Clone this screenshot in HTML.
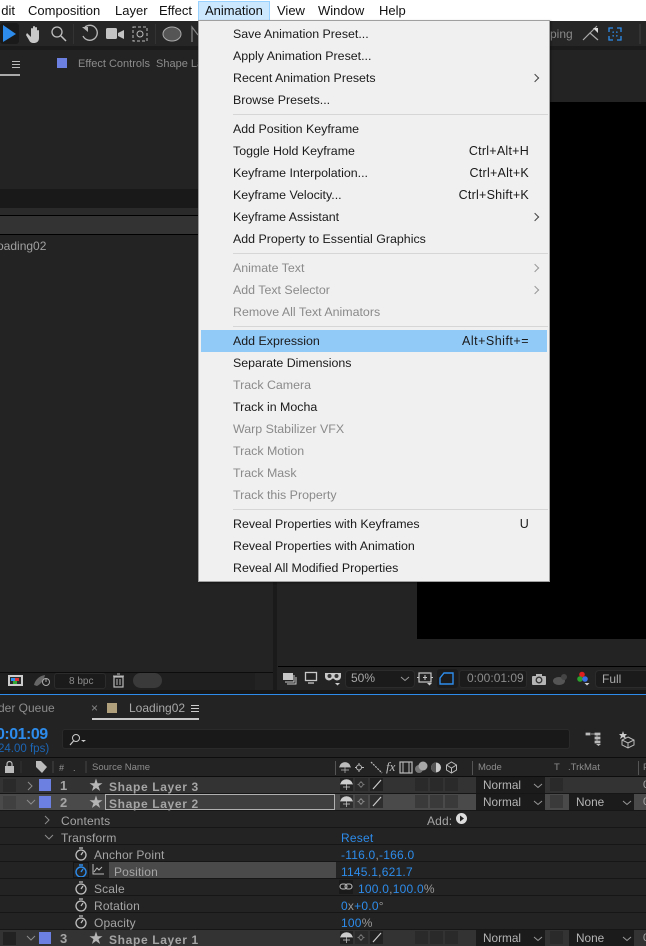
<!DOCTYPE html>
<html><head><meta charset="utf-8">
<style>
html,body{margin:0;padding:0;background:#1a1a1a}
#p{position:relative;width:646px;height:946px;overflow:hidden;background:#1a1a1a;font-family:"Liberation Sans","Noto Sans CJK TC",sans-serif;font-size:12px;color:#999}
#p div,#p span.a,#p svg{position:absolute}
.t{white-space:nowrap;line-height:16px;position:absolute}
.mb{font-size:13px;color:#111;top:3px}
.m{position:absolute;left:233px;white-space:nowrap;font-size:12.4px;line-height:16px;color:#1a1a1a}
.d{color:#8a8a8a}
.k{position:absolute;right:117px;white-space:nowrap;font-size:12.5px;letter-spacing:.25px;line-height:16px;color:#1a1a1a}
.sep{position:absolute;left:233px;width:315px;height:1px;background:#d6d6d6}
.ar{position:absolute;left:532px;width:5px;height:5px;border-top:1px solid #444;border-right:1px solid #444;transform:rotate(45deg)}
.b{color:#2d8ceb}
.g{color:#a8a8a8}
.row{position:absolute;left:0;width:646px;height:16px;background:#232323;border-bottom:1px solid #161616}
.sq{position:absolute;width:13px;height:13px;background:#2a2a2a}
.lb{position:absolute;left:39px;width:12px;height:12px;background:#6b80e0}
.dd{position:absolute;height:16px;background:#1b1b1b;color:#b5b5b5;font-size:11.8px;line-height:16px;padding-left:7px;box-sizing:border-box}
.nm{position:absolute;left:109px;font-weight:bold;font-size:12px;letter-spacing:.65px;color:#a5a5a5;line-height:16px;white-space:nowrap}
.num{position:absolute;left:60px;font-weight:bold;font-size:13px;color:#a5a5a5;line-height:16px}
.star{position:absolute;left:89px;font-size:14px;color:#b5b5b5;line-height:15px}
.prop{position:absolute;font-size:12px;letter-spacing:.15px;line-height:16px;color:#a5a5a5;white-space:nowrap}
.val{position:absolute;font-size:12px;letter-spacing:.22px;line-height:16px;color:#2d8ceb;white-space:nowrap}
</style></head><body>
<div id="p">

<!-- menu bar -->
<div style="left:0;top:0;width:646px;height:21px;background:#fff"></div>
<span class="t mb" style="left:0;width:15px;overflow:hidden;direction:rtl">dit</span>
<span class="t mb" style="left:28px">Composition</span>
<span class="t mb" style="left:115px">Layer</span>
<span class="t mb" style="left:159px">Effect</span>
<div style="left:198px;top:1px;width:70px;height:19px;background:#cce8ff;border:1px solid #99d1ff"></div>
<span class="t mb" style="left:205px">Animation</span>
<span class="t mb" style="left:277px">View</span>
<span class="t mb" style="left:318px">Window</span>
<span class="t mb" style="left:379px">Help</span>

<!-- toolbar -->
<div style="left:0;top:21px;width:646px;height:25px;background:#262626"></div>
<div style="left:0;top:46px;width:646px;height:4px;background:#1b1b1b"></div>
<div style="left:0;top:23px;width:19px;height:21px;background:#1a1a1a;border-radius:3px"></div>
<svg style="left:0;top:22px" width="200" height="24" viewBox="0 0 200 24">
<path d="M3 3L16 12L3 20Z" fill="#2d8ceb"/>
<path d="M27 11l4 4V7a1 1 0 012 0v4-6a1 1 0 012 0v6-5a1 1 0 012 0v6-3a1 1 0 012 0v7c0 4-3 5-5 5-3 0-4-1-5-3l-3-5z" fill="#c8c8c8"/>
<circle cx="57" cy="10" r="5" fill="none" stroke="#c0c0c0" stroke-width="1.3"/><path d="M61 14l5 5" stroke="#c0c0c0" stroke-width="1.5"/>
<path d="M85 5a7.500 7.500 0 11-2 9" fill="none" stroke="#b5b5b5" stroke-width="1.4"/><path d="M82 5h6v5z" fill="#b5b5b5"/>
<rect x="106" y="6" width="11" height="11" rx="1.500" fill="#c4c4c4"/><path d="M118 11l6-3v9l-6-3z" fill="#c4c4c4"/>
<rect x="133" y="5" width="14" height="14" fill="none" stroke="#bbb" stroke-dasharray="3 2"/><circle cx="140" cy="12" r="3" fill="none" stroke="#bbb"/>
<ellipse cx="172" cy="12" rx="9" ry="7" fill="#555" stroke="#aaa"/>
<path d="M192 20V5l6 8" fill="none" stroke="#888" stroke-width="1.2"/>
</svg>
<div style="left:73px;top:24px;width:1px;height:20px;background:#333"></div>
<div style="left:155px;top:24px;width:1px;height:20px;background:#333"></div>
<span class="t" style="left:550px;top:26px;font-size:12px;color:#888">ping</span>
<svg style="left:580px;top:25px" width="50" height="20" viewBox="0 0 50 20">
<path d="M3 15l7-7 8 7M10 8l7-7" fill="none" stroke="#aaa" stroke-width="1.2"/><path d="M13 3h5v5z" fill="#ddd"/>
<path d="M29 7V3h4M37 3h4v4M41 11v4h-4M33 15h-4v-4" fill="none" stroke="#2d8ceb" stroke-width="1.3"/>
<path d="M33 8V7h1M36 7h1v1M37 10v1h-1M34 11h-1v-1" fill="none" stroke="#2d8ceb"/>
</svg>
<div style="left:639px;top:24px;width:2px;height:20px;background:#333"></div>

<!-- left panel -->
<div style="left:0;top:50px;width:273px;height:640px;background:#232323"></div>
<div style="left:0;top:74px;width:20px;height:2px;background:#aaa"></div>
<div style="left:12px;top:61px;width:8px;height:1px;background:#bbb;box-shadow:0 3px 0 #bbb,0 6px 0 #bbb"></div>
<div style="left:57px;top:58px;width:10px;height:10px;background:#6b80e0"></div>
<span class="t" style="left:78px;top:56px;color:#8c8c8c;font-size:11px">Effect Controls&nbsp; Shape La</span>
<div style="left:0;top:189px;width:273px;height:19px;background:#191919"></div>
<div style="left:0;top:208px;width:273px;height:7px;background:#2a2a2a"></div>
<div style="left:0;top:215px;width:273px;height:1px;background:#000"></div>
<div style="left:0;top:216px;width:273px;height:18px;background:#333"></div>
<div style="left:0;top:234px;width:273px;height:1px;background:#000"></div>
<span class="t" style="left:-4px;top:238px;font-size:12px;color:#a0a0a0">&#8202;oading02</span>

<!-- left footer -->
<div style="left:0;top:672px;width:273px;height:1px;background:#0c0c0c"></div>
<div style="left:0;top:673px;width:255px;height:17px;background:#1f1f1f"></div>
<svg style="left:5px;top:672px" width="125" height="18" viewBox="0 0 125 18">
<rect x="3" y="3" width="15" height="11" fill="#ccc"/><rect x="5" y="5" width="11" height="7" fill="#2a2a2a"/><rect x="6" y="6" width="5" height="3" fill="#2d8ceb"/><rect x="10" y="6" width="4" height="3" fill="#d33"/><rect x="8" y="9" width="4" height="3" fill="#3a3"/>
<path d="M29 13c1-5 5-9 11-10-1 5-4 9-8 11z" fill="#666"/><circle cx="41" cy="10" r="3.500" fill="none" stroke="#aaa"/><path d="M41 6v4" stroke="#aaa"/>
<rect x="109" y="5" width="9" height="10" fill="none" stroke="#bbb" stroke-width="1.2"/><path d="M108 4h11M112 2h3M112 7v6M115 7v6" stroke="#bbb"/>
</svg>
<div style="left:54px;top:673px;width:52px;height:16px;background:#1b1b1b;border:1px solid #2c2c2c;border-radius:3px;box-sizing:border-box"></div>
<span class="t" style="left:69px;top:674px;font-size:10px;color:#8c8c8c">8 bpc</span>
<div style="left:133px;top:673px;width:29px;height:15px;background:#3a3a3a;border-radius:8px"></div>

<!-- right panel -->
<div style="left:277px;top:50px;width:369px;height:640px;background:#232323"></div>
<div style="left:277px;top:102px;width:369px;height:1px;background:#000"></div>
<div style="left:417px;top:103px;width:229px;height:536px;background:#000"></div>
<div style="left:278px;top:666px;width:368px;height:1px;background:#000"></div>
<div style="left:345px;top:670px;width:70px;height:18px;background:#1b1b1b;border:1px solid #2c2c2c;border-radius:4px;box-sizing:border-box"></div>
<span class="t" style="left:351px;top:670px;font-size:12px;color:#a8a8a8">50%</span>
<svg style="left:400px;top:676px" width="10" height="6"><path d="M1 1l4 3.500L9 1" fill="none" stroke="#999"/></svg>
<div style="left:437px;top:669px;width:21px;height:19px;background:#1b1b1b;border-radius:3px"></div>
<svg style="left:439px;top:671px" width="16" height="15"><path d="M5 2h9v11H1V7z" fill="none" stroke="#2d8ceb" stroke-width="1.400"/></svg>
<div style="left:459px;top:670px;width:68px;height:18px;background:#1b1b1b;border:1px solid #2a2a2a;border-radius:3px;box-sizing:border-box"></div>
<span class="t" style="left:467px;top:670px;font-size:12px;color:#8c8c8c">0:00:01:09</span>
<div style="left:595px;top:670px;width:60px;height:18px;background:#1b1b1b;border:1px solid #2c2c2c;border-radius:4px;box-sizing:border-box"></div>
<span class="t" style="left:602px;top:671px;font-size:12px;color:#aaa">Full</span>
<svg style="left:280px;top:670px" width="320" height="20" viewBox="0 0 320 20">
<rect x="3" y="3" width="10" height="7" fill="#c8c8c8"/><path d="M14 5v7H5M16 7v7H7" stroke="#c8c8c8" fill="none"/>
<rect x="25.500" y="2.500" width="11" height="8" fill="none" stroke="#c8c8c8" stroke-width="1.3"/><path d="M28 13h6" stroke="#c8c8c8" stroke-width="1.300"/>
<path d="M45 3h16v4a4 4 0 01-7 2 1.500 1.500 0 00-2 0 4 4 0 01-7-2z" fill="#c8c8c8"/><circle cx="49.500" cy="6" r="2" fill="#333"/><circle cx="56.500" cy="6" r="2" fill="#333"/>
<rect x="139" y="3" width="12" height="9" fill="none" stroke="#c8c8c8" stroke-width="1.2"/><path d="M145 5v5M143 7.500h4M137 7.500h2M151 7.500h2" stroke="#c8c8c8"/>
<path d="M147 13h5l-2.500 2.500z" fill="#ccc"/>
<path d="M55 13h5l-2.500 2.500z" fill="#ccc"/>
<rect x="252" y="6" width="14" height="9" rx="1" fill="#b5b5b5"/><rect x="256" y="4" width="6" height="3" fill="#b5b5b5"/><circle cx="259" cy="10" r="2.800" fill="#b5b5b5" stroke="#333" stroke-width="1.300"/>
<path d="M273 11a6 4 0 0112 0 6 4 0 01-12 0z" fill="#555"/><circle cx="284" cy="7" r="3" fill="#444"/>
<circle cx="302" cy="4.500" r="2.800" fill="#e02020"/><circle cx="300" cy="9" r="2.800" fill="#2ca02c"/><circle cx="305" cy="9" r="2.800" fill="#3a6fe8"/>
<path d="M304.500 13h5l-2.500 2.500z" fill="#ccc"/>
</svg>

<!-- timeline -->
<div style="left:0;top:690px;width:646px;height:4px;background:#161616"></div>
<div style="left:0;top:694px;width:646px;height:1px;background:#2d8ceb"></div>
<div style="left:0;top:695px;width:646px;height:251px;background:#232323"></div>
<span class="t" style="left:-2px;top:700px;font-size:12px;color:#8c8c8c">der Queue</span>
<span class="t" style="left:91px;top:700px;font-size:12px;color:#888">×</span>
<div style="left:107px;top:703px;width:10px;height:10px;background:#b0a07c"></div>
<span class="t" style="left:129px;top:700px;font-size:12px;color:#a8a8a8">Loading02</span>
<div style="left:191px;top:705px;width:8px;height:1px;background:#ccc;box-shadow:0 3px 0 #ccc,0 6px 0 #ccc"></div>
<div style="left:92px;top:718px;width:107px;height:2px;background:#c8c8c8"></div>
<span class="t" style="left:-4px;top:725px;font-size:16px;font-weight:bold;color:#2d8ceb;letter-spacing:-.5px;line-height:20px">0:01:09</span>
<span class="t" style="left:-2px;top:741px;font-size:11.500px;color:#1c66b5">24.00 fps)</span>
<div style="left:62px;top:729px;width:508px;height:20px;background:#191919;border:1px solid #2a2a2a;border-radius:3px;box-sizing:border-box"></div>
<svg style="left:68px;top:733px" width="20" height="14"><circle cx="8" cy="5" r="3.500" fill="none" stroke="#ccc"/><path d="M5.500 8L2 12" stroke="#ccc" stroke-width="1.200"/><path d="M13 7h5l-2.500 2z" fill="#ccc"/></svg>
<svg style="left:585px;top:728px" width="55" height="22" viewBox="0 0 55 22">
<path d="M1 5h4v2H1zM6 6h9M10 5h5v2h-5zM10 9h5v2h-5zM10 13h5v2h-5zM12 6v8" fill="#bbb" stroke="#bbb" stroke-width=".8"/><path d="M11 16h5l-2.500 2z" fill="#bbb"/>
<path d="M38 3l1 3 3 0-2 2 1 3-3-2-3 2 1-3-2-2 3 0z" fill="#ccc"/><path d="M43 9l6 3v5l-6 3-6-3v-5zM37 12l6 3 6-3M43 15v5" fill="none" stroke="#bbb"/>
</svg>

<!-- column header -->
<div style="left:0;top:757px;width:646px;height:1px;background:#0d0d0d"></div>
<div style="left:0;top:776px;width:646px;height:1px;background:#0d0d0d"></div>
<svg style="left:0;top:758px" width="110" height="18" viewBox="0 0 110 18">
<rect x="5" y="8" width="9" height="7" fill="#bbb"/><path d="M7 8V6a2.500 2.500 0 015 0v2" fill="none" stroke="#bbb" stroke-width="1.200"/>
<path d="M21 3v12" stroke="#333"/>
<path d="M36 3h5l6 6-5 6-6-6z" fill="#bbb"/>
<path d="M53 3v12M86 3v12" stroke="#444"/>
</svg>
<span class="t" style="left:59px;top:760px;font-size:9px;color:#999">#</span>
<span class="t" style="left:73px;top:760px;font-size:9px;color:#999">.</span>
<span class="t" style="left:92px;top:760px;font-size:9.500px;color:#8c8c8c">Source Name</span>
<span class="t" style="left:478px;top:760px;font-size:9.500px;color:#8c8c8c">Mode</span>
<span class="t" style="left:554px;top:760px;font-size:9.500px;color:#8c8c8c">T</span>
<span class="t" style="left:568px;top:760px;font-size:9.500px;color:#8c8c8c">.TrkMat</span>
<div style="left:335px;top:761px;width:1px;height:14px;background:#555"></div>
<div style="left:472px;top:761px;width:1px;height:14px;background:#555"></div>
<div style="left:638px;top:761px;width:1px;height:14px;background:#555"></div>
<svg style="left:338px;top:760px" width="125" height="15" viewBox="0 0 125 15">
<path d="M2 7a5 4.500 0 0110 0zM7 7v6M3 10h8M1 7h12" fill="#bbb" stroke="#bbb" stroke-width=".7"/>
<path d="M21 3v9M17 7.500h9" stroke="#bbb"/><circle cx="21" cy="7.500" r="2.500" fill="#232323" stroke="#bbb"/>
<path d="M33 2l11 11" stroke="#bbb" stroke-dasharray="2 1" stroke-width="1.200"/>
<rect x="62" y="2" width="12" height="11" fill="none" stroke="#bbb" stroke-width="1.200"/><path d="M65 2v11M71 2v11" stroke="#bbb"/>
<circle cx="81" cy="9" r="4" fill="#777"/><circle cx="85" cy="6" r="4.500" fill="#a8a8a8"/>
<circle cx="98" cy="7.500" r="5" fill="#ccc"/><path d="M98 12.500a5 5 0 010-10z" fill="#555"/>
<path d="M113.500 2l5 3v5l-5 3-5-3V5zM108.500 5l5 3 5-3M113.500 8v5" fill="none" stroke="#bbb"/>
</svg>
<span class="t" style="left:386px;top:759px;font-size:13px;font-style:italic;color:#bbb;font-family:'Liberation Serif',serif">fx</span>

<!-- row 1 -->
<div class="row" style="top:777px;background:#333;height:16px"></div>
<div class="sq" style="left:3px;top:779px;background:#2a2a2a"></div>
<svg style="left:26px;top:781px" width="8" height="10"><path d="M2 1l4 4-4 4" fill="none" stroke="#8c8c8c"/></svg>
<div class="lb" style="top:779px"></div>
<span class="num" style="top:778px">1</span>
<span class="star" style="top:778px">★</span>
<span class="nm" style="top:779px">Shape Layer 3</span>

<!-- row 2 -->
<div class="row" style="top:794px;background:#4a4a4a;height:16px"></div>
<div class="sq" style="left:3px;top:796px;background:#404040"></div>
<svg style="left:26px;top:799px" width="11" height="7"><path d="M1 1l4 4 4-4" fill="none" stroke="#8c8c8c"/></svg>
<div class="lb" style="top:796px"></div>
<span class="num" style="top:795px">2</span>
<span class="star" style="top:795px">★</span>
<div style="left:105px;top:794px;width:230px;height:16px;background:#3f3f3f;border:1.500px solid #b0b0b0;box-sizing:border-box"></div>
<span class="nm" style="top:796px">Shape Layer 2</span>

<!-- switches rows 1,2,3 -->
<svg style="left:338px;top:777px" width="308" height="169" viewBox="0 0 308 169">
<g id="sw1">
<rect x="2" y="1" width="13" height="13" fill="#222"/><path d="M3 7a5 4 0 0111 0zM8.500 7v6M5 10h7M2 7h13" fill="#ccc" stroke="#ccc" stroke-width=".7"/>
<rect x="17" y="1" width="13" height="13" fill="#2a2a2a"/><path d="M23 4v7M19.500 7.500h7" stroke="#777"/><circle cx="23" cy="7.500" r="2" fill="#2a2a2a" stroke="#777"/>
<rect x="32" y="1" width="13" height="13" fill="#222"/><path d="M35 12l8-9" stroke="#ccc" stroke-width="1.200"/>
<rect x="77" y="1" width="13" height="13" fill="#2a2a2a"/><rect x="92" y="1" width="13" height="13" fill="#2a2a2a"/><rect x="107" y="1" width="13" height="13" fill="#2a2a2a"/>
</g>
<g transform="translate(0,17)">
<rect x="2" y="1" width="13" height="13" fill="#2e2e2e"/><path d="M3 7a5 4 0 0111 0zM8.500 7v6M5 10h7M2 7h13" fill="#ccc" stroke="#ccc" stroke-width=".7"/>
<rect x="17" y="1" width="13" height="13" fill="#3a3a3a"/><path d="M23 4v7M19.500 7.500h7" stroke="#888"/><circle cx="23" cy="7.500" r="2" fill="#3a3a3a" stroke="#888"/>
<rect x="32" y="1" width="13" height="13" fill="#2e2e2e"/><path d="M35 12l8-9" stroke="#ccc" stroke-width="1.200"/>
<rect x="77" y="1" width="13" height="13" fill="#3a3a3a"/><rect x="92" y="1" width="13" height="13" fill="#3a3a3a"/><rect x="107" y="1" width="13" height="13" fill="#3a3a3a"/>
<rect x="212" y="1" width="13" height="13" fill="#3a3a3a"/>
</g>
<rect x="212" y="1" width="13" height="13" fill="#2a2a2a"/>
</svg>
<div class="dd" style="left:476px;top:777px;width:69px">Normal</div>
<svg style="left:533px;top:783px" width="10" height="6"><path d="M1 1l4 3.500L9 1" fill="none" stroke="#999"/></svg>
<div class="dd" style="left:476px;top:794px;width:69px">Normal</div>
<svg style="left:533px;top:800px" width="10" height="6"><path d="M1 1l4 3.500L9 1" fill="none" stroke="#999"/></svg>
<div class="dd" style="left:569px;top:794px;width:65px">None</div>
<svg style="left:622px;top:800px" width="10" height="6"><path d="M1 1l4 3.500L9 1" fill="none" stroke="#999"/></svg>
<span class="t" style="left:643px;top:777px;font-size:11px;color:#aaa">0</span>
<span class="t" style="left:643px;top:794px;font-size:11px;color:#aaa">0</span>
<span class="t" style="left:643px;top:760px;font-size:9.500px;color:#8c8c8c">P</span>

<!-- property rows -->
<div class="row" style="top:811px"></div>
<div class="row" style="top:828px"></div>
<div class="row" style="top:845px"></div>
<div class="row" style="top:862px"></div>
<div class="row" style="top:879px"></div>
<div class="row" style="top:896px"></div>
<div class="row" style="top:913px"></div>

<svg style="left:43px;top:815px" width="8" height="10"><path d="M2 1l4 4-4 4" fill="none" stroke="#8c8c8c"/></svg>
<span class="prop" style="left:61px;top:813px">Contents</span>
<span class="prop" style="left:427px;top:813px">Add:</span>
<svg style="left:455px;top:812px" width="13" height="13"><circle cx="6.500" cy="6.500" r="5.500" fill="#ddd"/><path d="M5 3.500l4 3-4 3z" fill="#232323"/></svg>
<svg style="left:44px;top:834px" width="11" height="7"><path d="M1 1l4 4 4-4" fill="none" stroke="#8c8c8c"/></svg>
<span class="prop" style="left:61px;top:830px">Transform</span>
<span class="val" style="left:341px;top:830px">Reset</span>

<svg style="left:74px;top:846px" width="14" height="85" viewBox="0 0 14 85" fill="none" stroke="#c0c0c0" stroke-width="1.300">
<circle cx="7" cy="9" r="5"/><path d="M5 2h4M7 9l2-3"/>
<g stroke="#2d8ceb" stroke-width="1.400"><circle cx="7" cy="26" r="5"/><path d="M5 19h4M7 26l2-3"/></g>
<circle cx="7" cy="43" r="5"/><path d="M5 36h4M7 43l2-3"/>
<circle cx="7" cy="60" r="5"/><path d="M5 53h4M7 60l2-3"/>
<circle cx="7" cy="77" r="5"/><path d="M5 70h4M7 77l2-3"/>
</svg>
<div style="left:73px;top:862px;width:16px;height:16px;border:1px solid #151515;box-sizing:border-box"></div>
<svg style="left:92px;top:864px" width="13" height="12"><path d="M1 0v10h11M2 8l3-4 2 2 3-3" fill="none" stroke="#bbb"/></svg>

<span class="prop" style="left:94px;top:847px">Anchor Point</span>
<div style="left:109px;top:862px;width:227px;height:16px;background:#4a4a4a"></div>
<span class="prop" style="left:114px;top:864px">Position</span>
<span class="prop" style="left:94px;top:881px">Scale</span>
<span class="prop" style="left:94px;top:898px">Rotation</span>
<span class="prop" style="left:94px;top:915px">Opacity</span>

<span class="val" style="left:341px;top:847px">-116.0<span style="color:#999">,</span>-166.0</span>
<span class="val" style="left:341px;top:864px">1145.1<span style="color:#999">,</span>621.7</span>
<div style="left:339px;top:880px;width:14px;height:14px;background:#1a1a1a"></div>
<svg style="left:339px;top:883px" width="14" height="8"><rect x="1" y="1" width="7" height="5" rx="2.500" fill="none" stroke="#bbb" stroke-width="1.100"/><rect x="6" y="1" width="7" height="5" rx="2.500" fill="none" stroke="#bbb" stroke-width="1.100"/></svg>
<span class="val" style="left:358px;top:881px">100.0<span style="color:#999">,</span>100.0<span style="color:#999">%</span></span>
<span class="val" style="left:341px;top:898px">0<span style="color:#999">x</span>+0.0<span style="color:#999">°</span></span>
<span class="val" style="left:341px;top:915px">100<span style="color:#999">%</span></span>

<!-- row 3 -->
<div class="row" style="top:930px;background:#333;height:16px;border:0"></div>
<div class="sq" style="left:3px;top:932px;background:#222"></div>
<svg style="left:26px;top:935px" width="11" height="7"><path d="M1 1l4 4 4-4" fill="none" stroke="#8c8c8c"/></svg>
<div class="lb" style="top:932px"></div>
<span class="num" style="top:931px">3</span>
<span class="star" style="top:931px">★</span>
<span class="nm" style="top:932px">Shape Layer 1</span>
<svg style="left:338px;top:930px" width="308" height="16" viewBox="0 0 308 16">
<rect x="2" y="1" width="13" height="13" fill="#222"/><path d="M3 7a5 4 0 0111 0zM8.500 7v6M5 10h7M2 7h13" fill="#ccc" stroke="#ccc" stroke-width=".7"/>
<rect x="17" y="1" width="13" height="13" fill="#2a2a2a"/><path d="M23 4v7M19.500 7.500h7" stroke="#777"/><circle cx="23" cy="7.500" r="2" fill="#2a2a2a" stroke="#777"/>
<rect x="32" y="1" width="13" height="13" fill="#222"/><path d="M35 12l8-9" stroke="#ccc" stroke-width="1.200"/>
<rect x="77" y="1" width="13" height="13" fill="#2a2a2a"/><rect x="92" y="1" width="13" height="13" fill="#2a2a2a"/><rect x="107" y="1" width="13" height="13" fill="#2a2a2a"/>
<rect x="212" y="1" width="13" height="13" fill="#2a2a2a"/>
</svg>
<div class="dd" style="left:476px;top:930px;width:69px">Normal</div>
<svg style="left:533px;top:936px" width="10" height="6"><path d="M1 1l4 3.500L9 1" fill="none" stroke="#999"/></svg>
<div class="dd" style="left:569px;top:930px;width:65px">None</div>
<svg style="left:622px;top:936px" width="10" height="6"><path d="M1 1l4 3.500L9 1" fill="none" stroke="#999"/></svg>
<span class="t" style="left:643px;top:930px;font-size:11px;color:#aaa">0</span>

<!-- menu -->
<div style="left:198px;top:20px;width:352px;height:562px;background:#f0f0f0;border:1px solid #a0a0a0;box-sizing:border-box;box-shadow:1px 1px 2px rgba(0,0,0,.4)"></div>
<div style="left:201px;top:330px;width:346px;height:22px;background:#91c9f7"></div>

<span class="m" style="top:26px">Save Animation Preset...</span>
<span class="m" style="top:48px">Apply Animation Preset...</span>
<span class="m" style="top:70px">Recent Animation Presets</span><span class="ar" style="top:75px"></span>
<span class="m" style="top:92px">Browse Presets...</span>
<div class="sep" style="top:114px"></div>
<span class="m" style="top:121px">Add Position Keyframe</span>
<span class="m" style="top:143px">Toggle Hold Keyframe</span><span class="k" style="top:143px">Ctrl+Alt+H</span>
<span class="m" style="top:165px">Keyframe Interpolation...</span><span class="k" style="top:165px">Ctrl+Alt+K</span>
<span class="m" style="top:187px">Keyframe Velocity...</span><span class="k" style="top:187px">Ctrl+Shift+K</span>
<span class="m" style="top:209px">Keyframe Assistant</span><span class="ar" style="top:214px"></span>
<span class="m" style="top:231px">Add Property to Essential Graphics</span>
<div class="sep" style="top:253px"></div>
<span class="m d" style="top:260px">Animate Text</span><span class="ar" style="top:265px;border-color:#999"></span>
<span class="m d" style="top:282px">Add Text Selector</span><span class="ar" style="top:287px;border-color:#999"></span>
<span class="m d" style="top:304px">Remove All Text Animators</span>
<div class="sep" style="top:326px"></div>
<span class="m" style="top:333px">Add Expression</span><span class="k" style="top:333px;letter-spacing:.5px">Alt+Shift+=</span>
<span class="m" style="top:355px">Separate Dimensions</span>
<span class="m d" style="top:377px">Track Camera</span>
<span class="m" style="top:399px">Track in Mocha</span>
<span class="m d" style="top:421px">Warp Stabilizer VFX</span>
<span class="m d" style="top:443px">Track Motion</span>
<span class="m d" style="top:465px">Track Mask</span>
<span class="m d" style="top:487px">Track this Property</span>
<div class="sep" style="top:509px"></div>
<span class="m" style="top:516px">Reveal Properties with Keyframes</span><span class="k" style="top:516px">U</span>
<span class="m" style="top:538px">Reveal Properties with Animation</span>
<span class="m" style="top:560px">Reveal All Modified Properties</span>

</div>
</body></html>
